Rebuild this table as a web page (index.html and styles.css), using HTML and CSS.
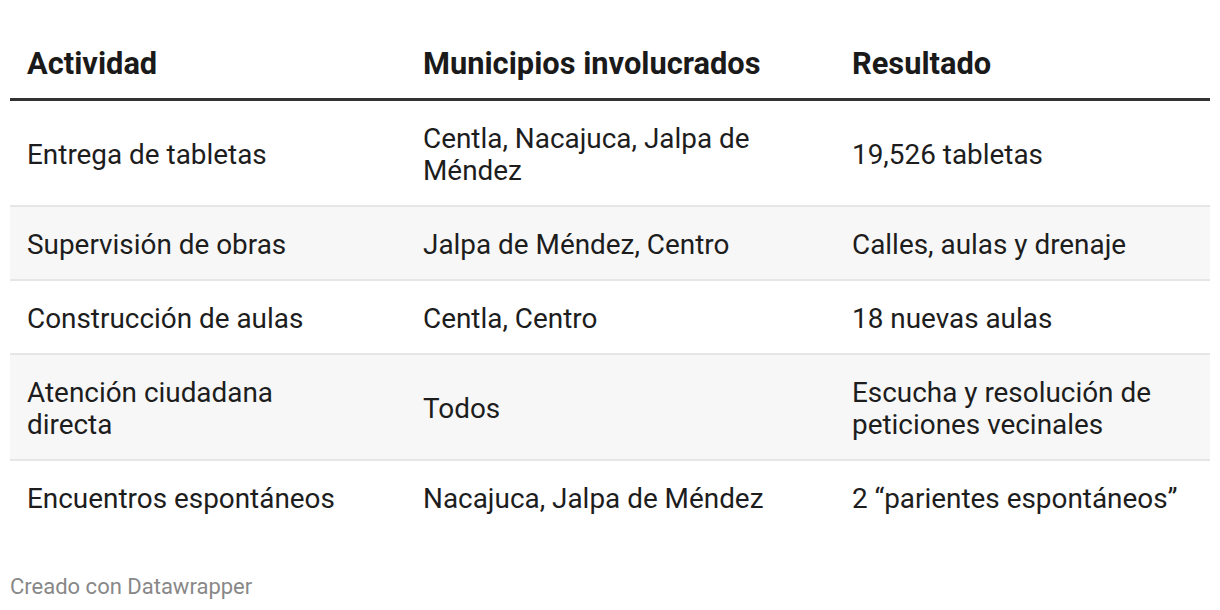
FILE: index.html
```html
<!DOCTYPE html>
<html lang="es">
<head>
<meta charset="utf-8">
<title>Tabla</title>
<link rel="stylesheet" href="styles.css">
</head>
<body>
<div class="chart">
  <table class="dw-table">
    <colgroup>
      <col class="c1">
      <col class="c2">
      <col class="c3">
    </colgroup>
    <thead>
      <tr>
        <th class="col1">Actividad</th>
        <th>Municipios involucrados</th>
        <th>Resultado</th>
      </tr>
    </thead>
    <tbody>
      <tr>
        <td class="col1">Entrega de tabletas</td>
        <td>Centla, Nacajuca, Jalpa de Méndez</td>
        <td>19,526 tabletas</td>
      </tr>
      <tr class="alt">
        <td class="col1">Supervisión de obras</td>
        <td>Jalpa de Méndez, Centro</td>
        <td>Calles, aulas y drenaje</td>
      </tr>
      <tr>
        <td class="col1">Construcción de aulas</td>
        <td>Centla, Centro</td>
        <td>18 nuevas aulas</td>
      </tr>
      <tr class="alt">
        <td class="col1">Atención ciudadana directa</td>
        <td>Todos</td>
        <td>Escucha y resolución de peticiones vecinales</td>
      </tr>
      <tr class="last">
        <td class="col1">Encuentros espontáneos</td>
        <td>Nacajuca, Jalpa de Méndez</td>
        <td>2 “parientes espontáneos”</td>
      </tr>
    </tbody>
  </table>
  <div class="footer">Creado con Datawrapper</div>
</div>
</body>
</html>
```

FILE: styles.css
```css
html, body {
  margin: 0;
  padding: 0;
  background: #ffffff;
}

body {
  font-family: Roboto, "Liberation Sans", Arial, sans-serif;
  color: #1d1d1d;
}

.chart {
  padding: 28px 10px 0 10px;
}

.dw-table {
  width: 1200px;
  border-collapse: collapse;
  table-layout: fixed;
  font-size: 27.9px;
  line-height: 32px;
}

.c1 { width: 396px; }
.c2 { width: 429px; }
.c3 { width: 375px; }

.dw-table th,
.dw-table td {
  text-align: left;
  vertical-align: middle;
  padding: 22px 12px 18px 17px;
}

.dw-table th.col1,
.dw-table td.col1 {
  padding-right: 60px;
}

.dw-table th {
  font-size: 30.8px;
  line-height: 34px;
  font-weight: 700;
  color: #1a1a1a;
  padding-top: 19px;
  padding-bottom: 17px;
  border-bottom: 3.7px solid #333333;
}

.dw-table td {
  font-weight: 400;
  border-bottom: 2px solid #e6e6e6;
}

.dw-table tr.alt td {
  background: #f7f7f7;
}

.dw-table tr.last td {
  border-bottom: none;
}

.footer {
  margin-top: 41px;
  font-size: 22px;
  line-height: 26px;
  color: #888888;
}
```
